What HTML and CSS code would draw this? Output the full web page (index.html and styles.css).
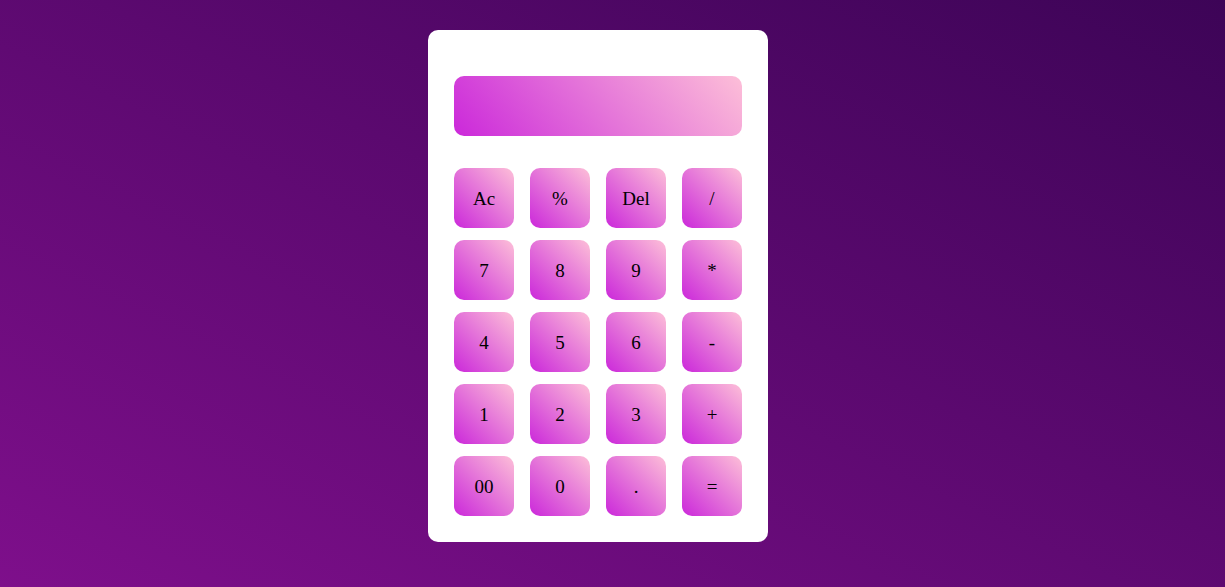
FILE: index.html
```html
<!DOCTYPE html>
<html lang="en">
<head>
<meta charset="utf-8">
<title>Calculator</title>
<link rel="stylesheet" href="styles.css">
</head>
<body>
<main class="page">
  <div class="calculator">
    <div class="display"></div>
    <div class="keys">
      <button class="key">Ac</button>
      <button class="key">%</button>
      <button class="key">Del</button>
      <button class="key">/</button>
      <button class="key">7</button>
      <button class="key">8</button>
      <button class="key">9</button>
      <button class="key">*</button>
      <button class="key">4</button>
      <button class="key">5</button>
      <button class="key">6</button>
      <button class="key">-</button>
      <button class="key">1</button>
      <button class="key">2</button>
      <button class="key">3</button>
      <button class="key">+</button>
      <button class="key">00</button>
      <button class="key">0</button>
      <button class="key">.</button>
      <button class="key">=</button>
    </div>
  </div>
</main>
</body>
</html>
```
FILE: styles.css
```css
* { box-sizing: border-box; }
html, body { margin: 0; height: 100%; }
body {
  background: linear-gradient(to top right, #7e0f8b, #3d0457);
  font-family: "Liberation Serif", "DejaVu Serif", serif;
}
.page {
  min-height: 100%;
  display: flex;
  justify-content: center;
  align-items: flex-start;
  padding: 30px 29px 0 0;
}
.calculator {
  width: 340px;
  background: #fff;
  border-radius: 10px;
  padding: 46px 26px 26px;
  display: flex;
  flex-direction: column;
  gap: 32px;
}
.display {
  height: 60px;
  border-radius: 10px;
  background: linear-gradient(50deg, #cb28da, #fdbfd8);
}
.keys {
  display: grid;
  grid-template-columns: repeat(4, 60px);
  column-gap: 16px;
  row-gap: 12px;
}
.key {
  width: 60px;
  height: 60px;
  border: none;
  border-radius: 10px;
  background: linear-gradient(to top right, #cb28da, #fdbfd8);
  font-family: "Liberation Serif", "DejaVu Serif", serif;
  font-size: 19px;
  color: #000;
  padding: 2px 0 0;
  display: flex;
  align-items: center;
  justify-content: center;
}
```
